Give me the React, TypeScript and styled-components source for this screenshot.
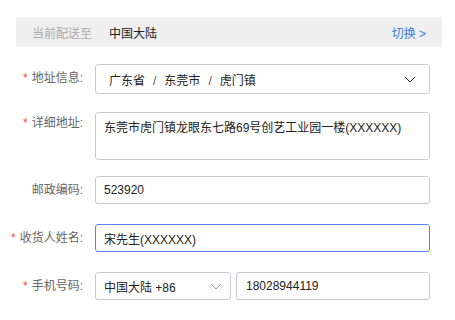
import React from 'react'
import styled, { createGlobalStyle } from 'styled-components'

const GlobalStyle = createGlobalStyle`
  body {
    margin: 0;
    background: #fff;
    font-family: "Liberation Sans", "Noto Sans CJK SC", sans-serif;
    font-size: 12px;
    color: #333;
  }
`

const Page = styled.div`
  width: 455px;
  height: 320px;
  box-sizing: border-box;
  padding-top: 17px;
  overflow: hidden;
`

const ShipBar = styled.div`
  margin: 0 13px 0 16px;
  height: 30px;
  background: #efefef;
  display: flex;
  align-items: center;
  padding: 0 16px;
`

const ShipLabel = styled.span`
  color: #aaa;
  margin-right: 17px;
`

const ShipValue = styled.span`
  color: #222;
  flex: 1;
`

const SwitchLink = styled.a`
  color: #3b7ad9;
  cursor: pointer;
`

const Form = styled.div`
  display: flex;
  flex-direction: column;
  width: 430px;
`

const Row = styled.div<{ mt: number }>`
  display: flex;
  align-items: flex-start;
  margin-top: ${({ mt }) => mt}px;
`

const Label = styled.div<{ top?: number }>`
  width: 83px;
  flex-shrink: 0;
  text-align: right;
  margin-right: 12px;
  line-height: 28px;
  margin-top: ${({ top }) => top ?? 0}px;
  color: #666;
  white-space: nowrap;
`

const Star = styled.span`
  color: #f0512f;
  margin-right: 4px;
`

const Field = styled.div<{ h?: number; focused?: boolean; pad?: number }>`
  flex: 1;
  box-sizing: border-box;
  height: ${({ h }) => h ?? 28}px;
  border: 1px solid ${({ focused }) => (focused ? '#5584f2' : '#c9c9d3')};
  border-radius: 3px;
  padding: 0 ${({ pad }) => pad ?? 8}px;
  display: flex;
  align-items: center;
  color: #222;
  background: #fff;
`

const AreaField = styled(Field)`
  align-items: flex-start;
  padding-top: 7px;
  line-height: 16px;
`

const Sep = styled.span`
  color: #555;
  margin: 0 8px;
`

const Grow = styled.span`
  flex: 1;
`

const PhoneGroup = styled.div`
  flex: 1;
  display: flex;
  gap: 5px;
`

const CodeSelect = styled(Field)`
  flex: 0 0 136px;
`

const Chevron: React.FC<{ color: string }> = ({ color }) => (
  <svg width="12" height="7" viewBox="0 0 12 7" fill="none">
    <path d="M1 1l5 5 5-5" stroke={color} strokeWidth="1" />
  </svg>
)

const App: React.FC = () => {
  return (
    <Page>
      <GlobalStyle />
      <ShipBar>
        <ShipLabel>当前配送至</ShipLabel>
        <ShipValue>中国大陆</ShipValue>
        <SwitchLink>切换 &gt;</SwitchLink>
      </ShipBar>
      <Form>
        <Row mt={17}>
          <Label top={0}>
            <Star>*</Star>地址信息:
          </Label>
          <Field h={30} pad={13}>
            <Grow>
              广东省<Sep>/</Sep>东莞市<Sep>/</Sep>虎门镇
            </Grow>
            <Chevron color="#333" />
          </Field>
        </Row>
        <Row mt={18}>
          <Label top={-3}>
            <Star>*</Star>详细地址:
          </Label>
          <AreaField h={48}>东莞市虎门镇龙眼东七路69号创艺工业园一楼(XXXXXX)</AreaField>
        </Row>
        <Row mt={16}>
          <Label>邮政编码:</Label>
          <Field>523920</Field>
        </Row>
        <Row mt={20}>
          <Label>
            <Star>*</Star>收货人姓名:
          </Label>
          <Field focused>宋先生(XXXXXX)</Field>
        </Row>
        <Row mt={20}>
          <Label>
            <Star>*</Star>手机号码:
          </Label>
          <PhoneGroup>
            <CodeSelect>
              <Grow>中国大陆 +86</Grow>
              <Chevron color="#999" />
            </CodeSelect>
            <Field pad={9}>18028944119</Field>
          </PhoneGroup>
        </Row>
      </Form>
    </Page>
  )
}

export default App
